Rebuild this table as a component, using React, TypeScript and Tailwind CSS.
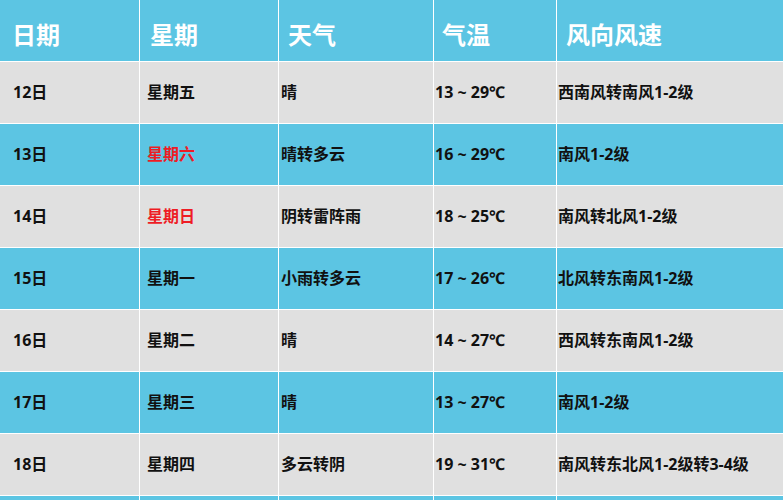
import React from "react";

type Row = { d: string; w: string; red?: boolean; wx: string; t: string; f: string };

const rows: Row[] = [
  { d: "12日", w: "星期五", wx: "晴", t: "13 ~ 29℃", f: "西南风转南风1-2级" },
  { d: "13日", w: "星期六", red: true, wx: "晴转多云", t: "16 ~ 29℃", f: "南风1-2级" },
  { d: "14日", w: "星期日", red: true, wx: "阴转雷阵雨", t: "18 ~ 25℃", f: "南风转北风1-2级" },
  { d: "15日", w: "星期一", wx: "小雨转多云", t: "17 ~ 26℃", f: "北风转东南风1-2级" },
  { d: "16日", w: "星期二", wx: "晴", t: "14 ~ 27℃", f: "西风转东南风1-2级" },
  { d: "17日", w: "星期三", wx: "晴", t: "13 ~ 27℃", f: "南风1-2级" },
  { d: "18日", w: "星期四", wx: "多云转阴", t: "19 ~ 31℃", f: "南风转东北风1-2级转3-4级" },
];

const font = { fontFamily: '"Noto Sans", "Noto Sans CJK SC", sans-serif' };

export default function App() {
  return (
    <div className="w-[783px] h-[500px] overflow-hidden bg-white" style={font}>
      <div className="grid grid-cols-[139px_138px_154px_122px_226px] gap-px bg-white">
        <div className="h-[61px] bg-[#5cc5e3] text-white font-bold text-[24px] flex items-center pl-[12px] pt-[9px]">日期</div>
        <div className="h-[61px] bg-[#5cc5e3] text-white font-bold text-[24px] flex items-center pl-[10px] pt-[9px]">星期</div>
        <div className="h-[61px] bg-[#5cc5e3] text-white font-bold text-[24px] flex items-center pl-[9px] pt-[9px]">天气</div>
        <div className="h-[61px] bg-[#5cc5e3] text-white font-bold text-[24px] flex items-center pl-[8px] pt-[9px]">气温</div>
        <div className="h-[61px] bg-[#5cc5e3] text-white font-bold text-[24px] flex items-center pl-[9px] pt-[9px]">风向风速</div>
        {rows.map((r, i) => {
          const bg = i % 2 === 0 ? "bg-[#e0e0e0]" : "bg-[#5cc5e3]";
          return (
            <React.Fragment key={r.d}>
              <div className={`h-[61px] ${bg} flex items-center pl-[13px] pb-[2px] text-[16px] font-bold text-[#111]`}>{r.d}</div>
              <div className={`h-[61px] ${bg} flex items-center pl-[7px] pb-[2px] text-[16px] font-bold ${r.red ? "text-[#ee1c25]" : "text-[#111]"}`}>{r.w}</div>
              <div className={`h-[61px] ${bg} flex items-center pl-[2px] pb-[2px] text-[16px] font-bold text-[#111]`}>{r.wx}</div>
              <div className={`h-[61px] ${bg} flex items-center pl-[1px] pb-[2px] text-[16px] font-bold text-[#111]`}>{r.t}</div>
              <div className={`h-[61px] ${bg} flex items-center pl-[1px] pb-[2px] text-[16px] font-bold text-[#111]`}>{r.f}</div>
            </React.Fragment>
          );
        })}
        <div className="h-[61px] bg-[#5cc5e3]"></div>
        <div className="h-[61px] bg-[#5cc5e3]"></div>
        <div className="h-[61px] bg-[#5cc5e3]"></div>
        <div className="h-[61px] bg-[#5cc5e3]"></div>
        <div className="h-[61px] bg-[#5cc5e3]"></div>
      </div>
    </div>
  );
}
